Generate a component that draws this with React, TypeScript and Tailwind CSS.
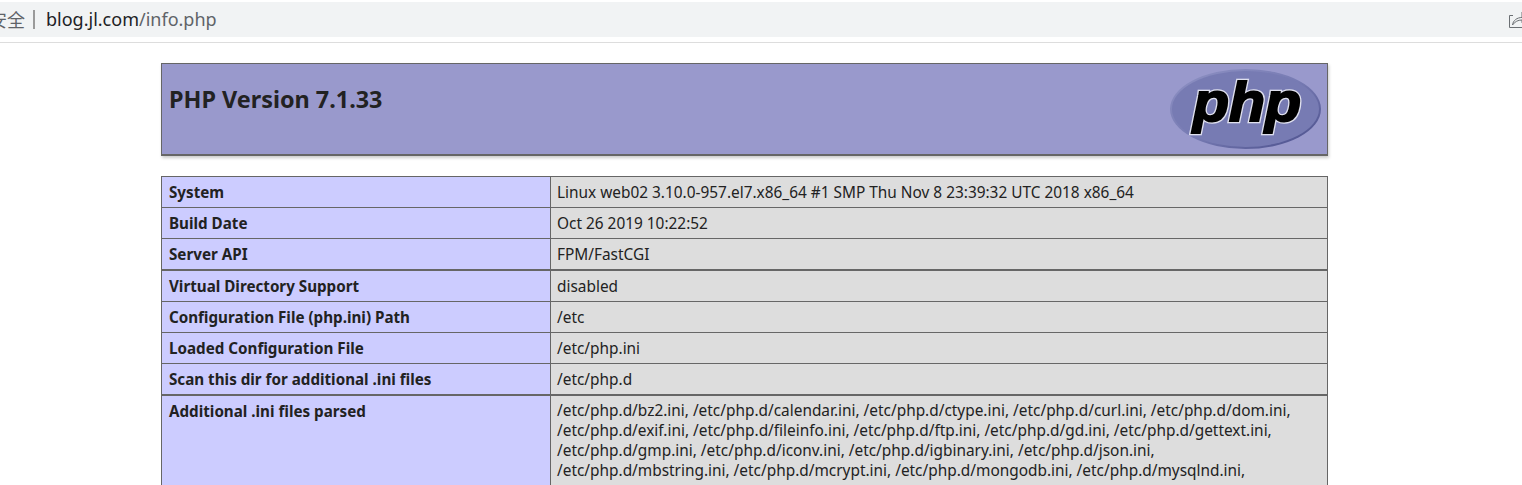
const groups: [string, string][][] = [
  [
    ["System", "Linux web02 3.10.0-957.el7.x86_64 #1 SMP Thu Nov 8 23:39:32 UTC 2018 x86_64"],
    ["Build Date", "Oct 26 2019 10:22:52"],
    ["Server API", "FPM/FastCGI"],
  ],
  [
    ["Virtual Directory Support", "disabled"],
    ["Configuration File (php.ini) Path", "/etc"],
    ["Loaded Configuration File", "/etc/php.ini"],
    ["Scan this dir for additional .ini files", "/etc/php.d"],
  ],
];

const parsedFiles = [
  "/etc/php.d/bz2.ini, /etc/php.d/calendar.ini, /etc/php.d/ctype.ini, /etc/php.d/curl.ini, /etc/php.d/dom.ini,",
  "/etc/php.d/exif.ini, /etc/php.d/fileinfo.ini, /etc/php.d/ftp.ini, /etc/php.d/gd.ini, /etc/php.d/gettext.ini,",
  "/etc/php.d/gmp.ini, /etc/php.d/iconv.ini, /etc/php.d/igbinary.ini, /etc/php.d/json.ini,",
  "/etc/php.d/mbstring.ini, /etc/php.d/mcrypt.ini, /etc/php.d/mongodb.ini, /etc/php.d/mysqlnd.ini,",
];

function PhpLogo() {
  const letters = {
    x: 23,
    y: 52,
    textLength: 108,
    lengthAdjust: "spacingAndGlyphs" as const,
    fontFamily: "'Liberation Sans', sans-serif",
    fontSize: 56,
    fontStyle: "italic",
    fontWeight: 700,
  };
  return (
    <svg width="151" height="80" viewBox="0 0 151 80" className="shrink-0">
      <defs>
        <linearGradient id="rim" x1="0" y1="0" x2="1" y2="1">
          <stop offset="0" stopColor="#8f92c4" />
          <stop offset="0.5" stopColor="#777bb3" />
          <stop offset="1" stopColor="#484c89" />
        </linearGradient>
      </defs>
      <ellipse cx="75.5" cy="40" rx="75.5" ry="40" fill="url(#rim)" />
      <ellipse cx="75.5" cy="40" rx="73.5" ry="38" fill="#777bb3" />
      {/* white outline first, then the black letters thickened by their own stroke */}
      <text {...letters} fill="#fff" stroke="#dfe0ee" strokeWidth="4.5">
        php
      </text>
      <text {...letters} fill="#000" stroke="#000" strokeWidth="2">
        php
      </text>
    </svg>
  );
}

function Row({ label, children, last }: { label: string; children: React.ReactNode; last?: boolean }) {
  return (
    <div className={`flex ${last ? "" : "border-b border-[#666]"}`}>
      <div className="w-[389px] shrink-0 bg-[#ccf] px-[7px] pt-[5px] pb-[4px] font-bold text-[15.2px] leading-[21px] border-r border-[#666]">
        {label}
      </div>
      <div className="flex-1 bg-[#ddd] px-[6px] pt-[5px] pb-[4px] text-[15.4px] leading-[21px]">{children}</div>
    </div>
  );
}

export default function App() {
  return (
    <div className="h-[485px] overflow-hidden bg-white text-[#222] font-['Noto_Sans',sans-serif]">
      {/* browser address bar */}
      <div className="h-[43px] pt-[2px] border-b border-[#ddd]">
        <div className="h-[35px] bg-[#f1f3f4] flex items-center overflow-hidden">
          <span className="ml-[-11px] w-[36px] shrink-0 text-[18px] text-[#5f6368] font-['Noto_Sans_CJK_SC',sans-serif]">安全</span>
          <span className="ml-[8px] w-[2px] h-[19px] bg-[#9a9a9a] shrink-0" />
          <span className="ml-[11px] text-[18px] text-[#202124]">
            blog.jl.com<span className="text-[#5f6368]">/info.php</span>
          </span>
          <svg width="18" height="18" viewBox="0 0 18 18" className="ml-auto mr-[-5px] mt-[1px] shrink-0" fill="none" stroke="#6b6f73" strokeWidth="1">
            <path d="M4 4.5H.5v12H18" />
            <path d="M3.5 14C4 9.5 8 6.5 13 6.5V1l5 5.5-5 5V9c-4 0-7 1.5-9.5 5z" />
          </svg>
        </div>
      </div>

      <div className="ml-[161px] w-[1167px] pt-[20px]">
        <div className="h-[93px] border border-b-2 border-[#666] bg-[#99c] shadow-[1px_2px_3px_#ccc] flex justify-between pl-[7px] pr-[6px] pt-[5px]">
          <h1 className="text-[23.4px] leading-[60px] font-bold">PHP Version 7.1.33</h1>
          <PhpLogo />
        </div>

        <div className="mt-[20px]">
          {groups.map((rows, i) => (
            <div key={i} className="border border-[#666]">
              {rows.map(([label, value], j) => (
                <Row key={label} label={label} last={j === rows.length - 1}>
                  {value}
                </Row>
              ))}
            </div>
          ))}
          <div className="border border-[#666]">
            <Row label="Additional .ini files parsed" last>
              {parsedFiles.map((line) => (
                <div key={line} className="whitespace-nowrap leading-[20px]">{line}</div>
              ))}
            </Row>
          </div>
        </div>
      </div>
    </div>
  );
}
